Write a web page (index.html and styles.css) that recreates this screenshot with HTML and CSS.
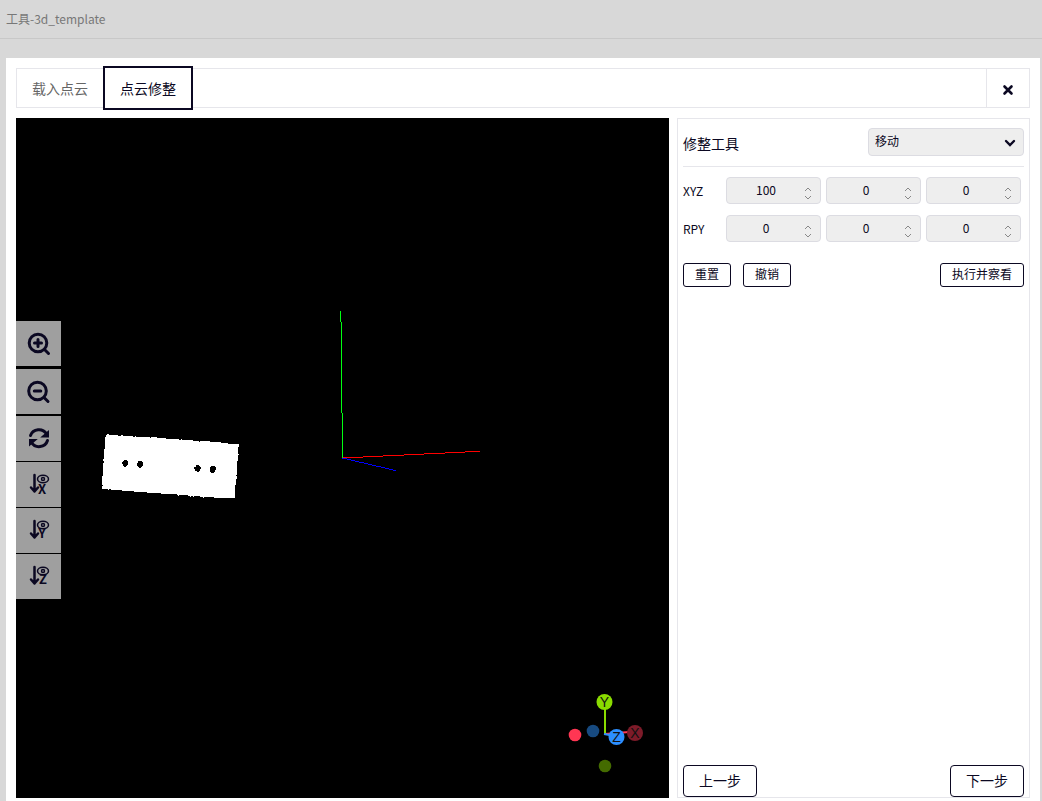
FILE: index.html
```html
<!DOCTYPE html>
<html lang="zh-CN">
<head>
<meta charset="utf-8">
<title>工具-3d_template</title>
<link rel="stylesheet" href="styles.css">
</head>
<body>
<header class="page-header">工具-3d_template</header>
<main class="card">
  <nav class="tabs">
    <button class="tab" type="button">载入点云</button>
    <button class="tab tab-active" type="button">点云修整</button>
    <button class="close" type="button" aria-label="关闭">
      <svg width="12" height="12" viewBox="0 0 12 12"><path d="M2.500 2.500l7 7M9.500 2.500l-7 7" fill="none" stroke="#0b0822" stroke-width="2.600" stroke-linecap="round"/></svg>
    </button>
  </nav>
  <div class="workspace">
    <section class="viewer" aria-label="点云视图">
      <svg class="scene" viewBox="0 0 653 680" shape-rendering="crispEdges">
        <path fill="#fff" d="M91 316H93V317H102V318H105V317H107V318H117V319H119V318H120V319H134V320H135V319H141V320H150V321H163V322H165V321H166V322H177V323H183V324H184V323H194V324H205V325H212V326H223V329H222V336H223V337H222V343H221V357H220V358H221V361H220V367H219V380H198V379H188V380H187V379H184V378H178V379H177V378H175V379H174V378H172V377H163V378H162V377H161V376H145V375H131V374H118V373H106V372H95V371H93V372H92V371H86V368H87V367H86V358H87V345H88V343H87V341H88V331H89V319H90V317H91Z"/>
        <g fill="#000">
          <path d="M108 342h3v1h1v4h-1v1h-1v1h-2v-1h-1v-2h-1v-2h1v-1h1z"/>
          <path d="M122 343h4v1h1v4h-1v1h-1v1h-2v-1h-1v-1h-1v-3h1z"/>
          <path d="M180 347h3v1h1v1h1v2h-1v2h-1v1h-2v-1h-2v-2h-1v-2h2z"/>
          <path d="M195 348h4v1h1v3h-1v2h-1v1h-3v-1h-1v-5h1z"/>
        </g>
        <g fill="#00ff12">
          <path d="M324 193h1v11h-1zM325 204h1v91h-1zM326 295h1v45h-1z"/>
        </g>
        <path fill="#f00" d="M327 339h20v1h-20zM347 338h20v1h-20zM367 337h21v1h-21zM388 336h20v1h-20zM408 335h21v1h-21zM429 334h20v1h-20zM449 333h15v1h-15z"/>
        <path fill="#00f" d="M326 340h5v1h-5zM331 341h4v1h-4zM335 342h4v1h-4zM339 343h4v1h-4zM343 344h5v1h-5zM348 345h4v1h-4zM352 346h4v1h-4zM356 347h4v1h-4zM360 348h5v1h-5zM365 349h4v1h-4zM369 350h4v1h-4zM373 351h4v1h-4zM377 352h3v1h-3z"/>
      </svg>
      <div class="view-tools">
        <button class="tool tool-zoom-in" type="button" aria-label="放大">
          <svg width="24" height="24" viewBox="0 0 24 24"><g class="bold"><circle cx="11" cy="11" r="8.800"/><path d="M17.500 17.500l4 4M11 7.500v7M7.500 11h7"/></g></svg>
        </button>
        <button class="tool tool-zoom-out" type="button" aria-label="缩小">
          <svg width="24" height="24" viewBox="0 0 24 24"><g class="bold"><circle cx="10.500" cy="11" r="8.800"/><path d="M17 17.500l4 4M7.300 11h6.500"/></g></svg>
        </button>
        <button class="tool" type="button" aria-label="刷新">
          <svg width="24" height="24" viewBox="0 0 24 24"><path class="bold" d="M3.500 8.500A8.800 8.500 0 0 1 19.500 7M20.500 13.500A8.800 8.500 0 0 1 4.500 15.500"/><path fill="#0b0822" d="M22 3v7.500h-8.800zM2 19.500v-7.500h8.800z"/></svg>
        </button>
        <button class="tool" type="button" aria-label="X 轴视角">
          <svg width="24" height="24" viewBox="0 0 24 24"><path class="line" d="M7.500 2v16M4 14.500l3.500 4 3.500-4"/><g class="eye"><ellipse cx="16" cy="6" rx="5.500" ry="3.800"/><circle cx="16" cy="6" r="1.500"/></g><text class="axis" x="15" y="21">X</text></svg>
        </button>
        <button class="tool" type="button" aria-label="Y 轴视角">
          <svg width="24" height="24" viewBox="0 0 24 24"><path class="line" d="M7.500 2v16M4 14.500l3.500 4 3.500-4"/><g class="eye"><ellipse cx="16" cy="6" rx="5.500" ry="3.800"/><circle cx="16" cy="6" r="1.500"/></g><text class="axis" x="15" y="19">Y</text></svg>
        </button>
        <button class="tool" type="button" aria-label="Z 轴视角">
          <svg width="24" height="24" viewBox="0 0 24 24"><path class="line" d="M7.500 2v16M4 14.500l3.500 4 3.500-4"/><g class="eye"><ellipse cx="16" cy="6" rx="5.500" ry="3.800"/><circle cx="16" cy="6" r="1.500"/></g><text class="axis" x="16" y="19">Z</text></svg>
        </button>
      </div>
      <svg class="gizmo" width="90" height="90" viewBox="0 0 90 90">
        <circle cx="51" cy="72" r="6.300" fill="#446b00"/>
        <circle cx="39" cy="37" r="6.300" fill="#174a80"/>
        <circle cx="21" cy="41" r="6.300" fill="#ff3653"/>
        <path d="M51 40l24-2" stroke="#ff3653" stroke-width="2"/>
        <circle cx="81" cy="39" r="8" fill="#7d1b29"/>
        <path d="M51 40V10" stroke="#8adb00" stroke-width="2"/>
        <circle cx="50.500" cy="8" r="8" fill="#8adb00"/>
        <path d="M50 40l11 2" stroke="#2c8fff" stroke-width="2"/>
        <circle cx="62.500" cy="43" r="8" fill="#2c8fff"/>
        <g class="gizmo-label"><text x="50.500" y="13">Y</text><text x="81" y="44">X</text><text x="62.500" y="48">Z</text></g>
      </svg>
    </section>
    <aside class="panel">
      <div class="panel-head">
        <label for="trim-tool">修整工具</label>
        <div class="select-wrap">
          <select id="trim-tool" class="select"><option>移动</option></select>
          <svg class="select-arrow" width="12" height="12" viewBox="0 0 12 12"><path d="M2 4l4 4 4-4" fill="none" stroke="#0b0822" stroke-width="2.400" stroke-linecap="round"/></svg>
        </div>
      </div>
      <div class="fields">
        <div class="field-row">
          <span class="field-name">XYZ</span>
          <label class="number"><input type="text" inputmode="numeric" value="100" aria-label="X"><svg class="spin" width="8" height="14" viewBox="0 0 8 14"><path d="M1 5l3-3 3 3M1 10l3 3 3-3"/></svg></label>
          <label class="number"><input type="text" inputmode="numeric" value="0" aria-label="Y"><svg class="spin" width="8" height="14" viewBox="0 0 8 14"><path d="M1 5l3-3 3 3M1 10l3 3 3-3"/></svg></label>
          <label class="number"><input type="text" inputmode="numeric" value="0" aria-label="Z"><svg class="spin" width="8" height="14" viewBox="0 0 8 14"><path d="M1 5l3-3 3 3M1 10l3 3 3-3"/></svg></label>
        </div>
        <div class="field-row">
          <span class="field-name">RPY</span>
          <label class="number"><input type="text" inputmode="numeric" value="0" aria-label="R"><svg class="spin" width="8" height="14" viewBox="0 0 8 14"><path d="M1 5l3-3 3 3M1 10l3 3 3-3"/></svg></label>
          <label class="number"><input type="text" inputmode="numeric" value="0" aria-label="P"><svg class="spin" width="8" height="14" viewBox="0 0 8 14"><path d="M1 5l3-3 3 3M1 10l3 3 3-3"/></svg></label>
          <label class="number"><input type="text" inputmode="numeric" value="0" aria-label="Y"><svg class="spin" width="8" height="14" viewBox="0 0 8 14"><path d="M1 5l3-3 3 3M1 10l3 3 3-3"/></svg></label>
        </div>
      </div>
      <div class="actions">
        <button class="btn" type="button">重置</button>
        <button class="btn" type="button">撤销</button>
        <button class="btn btn-run" type="button">执行并察看</button>
      </div>
      <div class="steps">
        <button class="btn btn-step" type="button">上一步</button>
        <button class="btn btn-step" type="button">下一步</button>
      </div>
    </aside>
  </div>
</main>
</body>
</html>
```

FILE: styles.css
```css
* {
  box-sizing: border-box;
}

body {
  margin: 0;
  min-height: 100vh;
  display: flex;
  flex-direction: column;
  background: #d8d8d8;
  color: #0b0822;
  font: 12px/18px "Noto Sans CJK SC", sans-serif;
}

button,
input,
select {
  font: inherit;
  color: inherit;
  margin: 0;
}

.page-header {
  height: 39px;
  padding: 10px 6px;
  border-bottom: 1px solid #c8c8c8;
  color: #777;
}

.card {
  flex: 1;
  display: flex;
  flex-direction: column;
  gap: 10px;
  margin: 19px 2px 0 6px;
  padding: 10px 10px 3px;
  background: #fff;
}

.tabs {
  display: flex;
  align-items: center;
  height: 40px;
  border: 1px solid #e6e6eb;
}

.tab {
  height: 44px;
  padding: 0 15px;
  border: 2px solid transparent;
  background: none;
  font-size: 14px;
  line-height: 20px;
  color: #666;
}

.tab:first-child {
  padding: 0 13px;
}

.tab-active {
  border-color: #0b0822;
  background: #fff;
  color: #0b0822;
}

.close {
  display: grid;
  place-items: center;
  align-self: stretch;
  width: 43px;
  margin-left: auto;
  padding: 4px 0 0;
  border: 0;
  border-left: 1px solid #e6e6eb;
  background: none;
}

.workspace {
  flex: 1;
  display: flex;
  gap: 8px;
}

.viewer {
  position: relative;
  flex: 1;
  background: #000;
}

.scene {
  position: absolute;
  inset: 0;
  width: 100%;
  height: 100%;
}

.view-tools {
  position: absolute;
  left: 0;
  top: 203px;
  display: flex;
  flex-direction: column;
  gap: 1px;
}

.tool {
  display: grid;
  place-items: center;
  width: 45px;
  height: 45px;
  padding: 0;
  border: 0;
  background: #9f9f9f;
}

.tool-zoom-in {
  margin-bottom: 2px;
}

.tool-zoom-out {
  margin-bottom: 1px;
}

.bold,
.line,
.eye {
  fill: none;
  stroke: #0b0822;
  stroke-linecap: round;
  stroke-linejoin: round;
}

.bold {
  stroke-width: 3px;
}

.line {
  stroke-width: 2.5px;
}

.eye {
  stroke-width: 1.5px;
}

.axis {
  font: bold 13px "Noto Sans CJK SC", sans-serif;
  text-anchor: middle;
  fill: #0b0822;
}

.gizmo {
  position: absolute;
  right: 25px;
  bottom: 14px;
}

.gizmo-label {
  font: 14px "Liberation Sans", sans-serif;
  text-anchor: middle;
  fill: #111;
}

.panel {
  width: 353px;
  display: flex;
  flex-direction: column;
  padding: 9px 5px 0;
  border: 1px solid #e6e6eb;
}

.panel-head {
  display: flex;
  justify-content: space-between;
  height: 39px;
  border-bottom: 1px solid #e6e6eb;
  font-size: 14px;
  line-height: 30px;
}

.select-wrap {
  position: relative;
}

.select {
  display: block;
  appearance: none;
  width: 156px;
  height: 28px;
  padding: 0 6px 2px;
  border: 1px solid #dcdce2;
  border-radius: 4px;
  background: #eee;
  font-size: 12px;
  line-height: 18px;
}

.select-arrow {
  position: absolute;
  right: 8px;
  top: 9px;
  pointer-events: none;
}

.fields {
  display: grid;
  gap: 11px;
  padding: 10px 3px 0 0;
}

.field-row {
  display: grid;
  grid-template-columns: 38px 1fr 1fr 1fr;
  column-gap: 5px;
  align-items: center;
}

.number {
  position: relative;
  height: 27px;
}

.number input {
  display: block;
  width: 100%;
  height: 27px;
  padding: 0 15px 2px 0;
  border: 1px solid #dcdce2;
  border-radius: 4px;
  background: #eee;
  text-align: center;
}

.spin {
  position: absolute;
  right: 9px;
  top: 9px;
  fill: none;
  stroke: #888;
  stroke-width: 1px;
}

.actions {
  display: flex;
  gap: 12px;
  padding-top: 21px;
}

.btn {
  height: 24px;
  padding: 0 11px 2px;
  border: 1px solid #0b0822;
  border-radius: 3px;
  background: #fff;
  line-height: 20px;
}

.btn-run {
  margin-left: auto;
}

.steps {
  display: flex;
  justify-content: space-between;
  margin-top: auto;
}

.btn-step {
  height: 32px;
  padding: 0 15px 2px;
  border-radius: 4px;
  font-size: 14px;
}
```
